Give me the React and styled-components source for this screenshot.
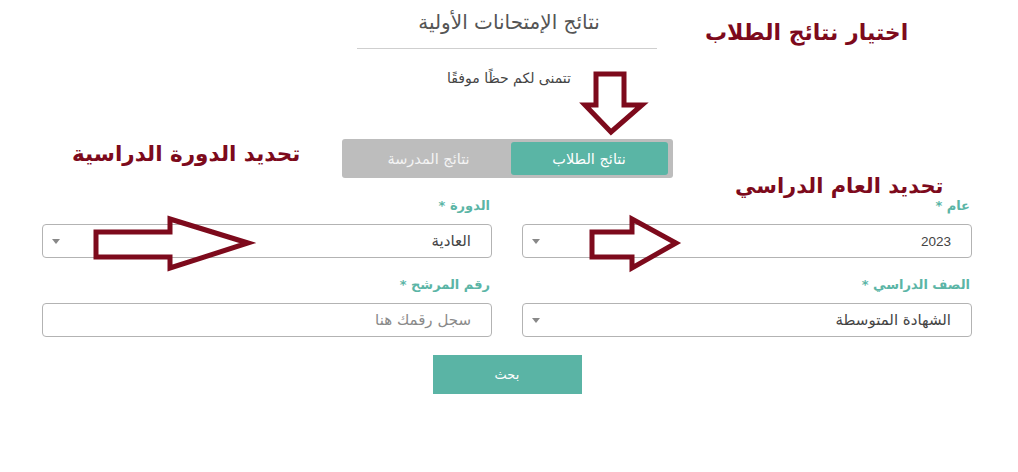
import React from "react";
import styled, { createGlobalStyle } from "styled-components";

const GlobalStyle = createGlobalStyle`
  html, body {
    margin: 0;
    padding: 0;
    background: #ffffff;
  }
  body {
    font-family: "DejaVu Sans", "Noto Sans", sans-serif;
  }
`;

const Page = styled.div`
  position: relative;
  width: 1018px;
  height: 472px;
  overflow: hidden;
  background: #fff;
  display: flex;
  flex-direction: column;
  align-items: center;
`;

const Title = styled.h1`
  margin: 9px 0 0;
  font-size: 20px;
  line-height: 26px;
  font-weight: normal;
  color: #555;
`;

const Divider = styled.div`
  width: 300px;
  height: 1px;
  margin-top: 13px;
  margin-left: -4px;
  background: #cfcfcf;
`;

const Subtitle = styled.p`
  margin: 19px 0 0;
  font-size: 14px;
  line-height: 20px;
  color: #444;
`;

const Tabs = styled.div`
  margin-top: 51px;
  margin-left: -4px;
  width: 331px;
  height: 39px;
  box-sizing: border-box;
  padding: 3px 5px 3px 5px;
  display: flex;
  background: #bdbdbd;
  border-radius: 3px;
`;

const Tab = styled.div`
  flex: ${(p) => (p.$active ? "0 0 157px" : "1")};
  display: flex;
  align-items: center;
  justify-content: center;
  border-radius: 3px;
  font-size: 14.5px;
  color: ${(p) => (p.$active ? "#fff" : "#f4f4f4")};
  background: ${(p) => (p.$active ? "#5ab5a5" : "transparent")};
`;

const Form = styled.div`
  margin-top: 19px;
  width: 1018px;
  box-sizing: border-box;
  padding: 0 46px 0 42px;
  display: grid;
  grid-template-columns: 1fr 1fr;
  column-gap: 30px;
  row-gap: 18px;
`;

const Field = styled.div`
  display: flex;
  flex-direction: column;
`;

const Label = styled.label`
  font-size: 13px;
  line-height: 18px;
  font-weight: bold;
  color: #5bb5a6;
  padding-right: 2px;
  margin-bottom: 9px;
`;

const Box = styled.div`
  height: 34px;
  box-sizing: border-box;
  border: 1px solid #b3b3b3;
  border-radius: 4px;
  display: flex;
  align-items: center;
  justify-content: space-between;
  padding: 0 20px 0 9px;
  font-size: 15px;
  color: ${(p) => (p.$placeholder ? "#8a8a8a" : "#444")};
  background: #fff;
`;

const Value = styled.span`
  font-family: ${(p) =>
    p.$num ? '"Liberation Sans", sans-serif' : '"DejaVu Sans", sans-serif'};
  font-size: ${(p) => (p.$num ? "13.5px" : "15px")};
`;

const Caret = styled.span`
  width: 0;
  height: 0;
  border-left: 4px solid transparent;
  border-right: 4px solid transparent;
  border-top: 5px solid #888;
`;

const SearchButton = styled.button`
  margin-top: 18px;
  margin-left: -4px;
  width: 149px;
  height: 39px;
  border: none;
  background: #5ab4a5;
  color: #fff;
  font-family: inherit;
  font-size: 13px;
`;

const Note = styled.div`
  position: absolute;
  top: ${(p) => p.$top}px;
  left: ${(p) => p.$left}px;
  font-family: "DejaVu Sans", sans-serif;
  font-weight: bold;
  font-size: ${(p) => p.$size}px;
  line-height: 30px;
  color: #7d0a1c;
  white-space: nowrap;
`;

const ArrowSvg = styled.svg`
  position: absolute;
  top: ${(p) => p.$top}px;
  left: ${(p) => p.$left}px;
  overflow: visible;
`;

const Select = ({ label, value, num }) => (
  <Field>
    <Label>{label} *</Label>
    <Box>
      <Value $num={num}>{value}</Value>
      <Caret />
    </Box>
  </Field>
);

export default function App() {
  return (
    <>
      <GlobalStyle />
      <Page>
        <Title>نتائج الإمتحانات الأولية</Title>
        <Divider />
        <Subtitle>تتمنى لكم حظًا موفقًا</Subtitle>
        <Tabs>
          <Tab>نتائج المدرسة</Tab>
          <Tab $active>نتائج الطلاب</Tab>
        </Tabs>
        <Form dir="rtl">
          <Select label="عام" value="2023" num />
          <Select label="الدورة" value="العادية" />
          <Select label="الصف الدراسي" value="الشهادة المتوسطة" />
          <Field>
            <Label>رقم المرشح *</Label>
            <Box $placeholder>
              <Value>سجل رقمك هنا</Value>
            </Box>
          </Field>
        </Form>
        <SearchButton>بحث</SearchButton>

        <Note $top={18} $left={705} $size={22}>اختيار نتائج الطلاب</Note>
        <Note $top={139} $left={72} $size={21.5}>تحديد الدورة الدراسية</Note>
        <Note $top={171} $left={735} $size={21}>تحديد العام الدراسي</Note>

        {/* down arrow to the students tab */}
        <ArrowSvg $top={72} $left={583} width="62" height="62" viewBox="0 0 62 62">
          <path
            d="M13 2 H41 V33 H59 L28 60 L2 33 H13 Z"
            fill="none"
            stroke="#7d0a1c"
            strokeWidth="5"
          />
        </ArrowSvg>

        {/* arrow onto the session select */}
        <ArrowSvg $top={217} $left={94} width="158" height="54" viewBox="0 0 158 54">
          <path
            d="M2 15 H76 V2 L154 26 L76 51 V40 H2 Z"
            fill="none"
            stroke="#7d0a1c"
            strokeWidth="5"
          />
        </ArrowSvg>

        {/* arrow onto the year select */}
        <ArrowSvg $top={217} $left={590} width="90" height="54" viewBox="0 0 90 54">
          <path
            d="M2 15 H42 V2 L86 26 L42 51 V40 H2 Z"
            fill="none"
            stroke="#7d0a1c"
            strokeWidth="5"
          />
        </ArrowSvg>
      </Page>
    </>
  );
}
